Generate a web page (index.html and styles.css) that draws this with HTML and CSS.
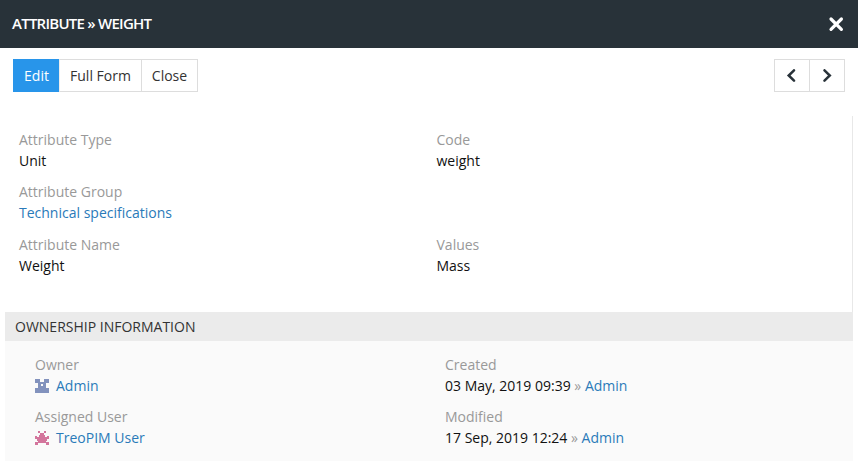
FILE: index.html
```html
<!DOCTYPE html>
<html lang="en">
<head>
<meta charset="utf-8">
<title>Attribute » Weight</title>
<link rel="stylesheet" href="styles.css">
</head>
<body>
<header class="modal-header">
  <h1 class="title">ATTRIBUTE » WEIGHT</h1>
  <svg class="close" width="16" height="16" viewBox="0 0 16 16"><path d="M3 3l10.4 10.4M13.4 3L3 13.4"/></svg>
</header>
<div class="toolbar">
  <div class="group">
    <button class="btn primary">Edit</button>
    <button class="btn full">Full Form</button>
    <button class="btn last">Close</button>
  </div>
  <div class="group pager">
    <button class="btn"><svg width="14" height="14" viewBox="0 0 14 14"><path d="M9 1.3L3.7 6.5 9 11.7"/></svg></button>
    <button class="btn"><svg width="14" height="14" viewBox="0 0 14 14"><path d="M4.5 1.3l5.3 5.2-5.3 5.2"/></svg></button>
  </div>
</div>
<main class="record">
  <section class="fields">
    <div class="cell"><div class="label">Attribute Type</div><div>Unit</div></div>
    <div class="cell"><div class="label">Code</div><div>weight</div></div>
    <div class="cell wide"><div class="label">Attribute Group</div><a>Technical specifications</a></div>
    <div class="cell"><div class="label">Attribute Name</div><div>Weight</div></div>
    <div class="cell"><div class="label">Values</div><div>Mass</div></div>
  </section>
  <h2 class="section-title">OWNERSHIP INFORMATION</h2>
  <section class="ownership">
    <div class="cell"><div class="label">Owner</div><div class="user"><svg class="blue" width="14" height="14" viewBox="0 0 14 14"><path fill-rule="evenodd" d="M0 0h5v3h4V0h5v4h-3v5h3v5H0V9h3V4H0zM6 5v2h2V5z"/></svg><a>Admin</a></div></div>
    <div class="cell"><div class="label">Created</div><div>03 May, 2019 09:39 <span class="sep">»</span> <a>Admin</a></div></div>
    <div class="cell"><div class="label">Assigned User</div><div class="user"><svg class="pink" width="14" height="14" viewBox="0 0 14 14"><path d="M3 0h2v2H3zM9 0h2v2H9zM5 2h4v2h1v2h2V5h2v3h-2v2h-1v2H3v-2H2V8H0V5h2v1h2V4h1zM0 11h3v3H0zM11 11h3v3h-3z"/></svg><a>TreoPIM User</a></div></div>
    <div class="cell"><div class="label">Modified</div><div>17 Sep, 2019 12:24 <span class="sep">»</span> <a>Admin</a></div></div>
  </section>
</main>
</body>
</html>
```
FILE: styles.css
```css
* { box-sizing: border-box; }
body { margin: 0; background: #fff; color: #111; font: 14px/21px "Open Sans", sans-serif; }
a { color: #2a7ab9; }
.modal-header { display: flex; align-items: center; justify-content: space-between; height: 48px; padding: 0 14px 0 12px; background: #283239; color: #fff; }
.title { margin: 0 0 2px; font-size: 15px; font-weight: 600; letter-spacing: -0.75px; }
.close { fill: none; stroke: #fff; stroke-width: 3.2; stroke-linecap: round; }
.toolbar { display: flex; justify-content: space-between; padding: 11px 13px 0; height: 68px; }
.group { display: flex; height: 33px; }
.btn { display: flex; align-items: center; justify-content: center; padding: 0; border: 1px solid #ddd; border-right: 0; background: #fff; color: #333; font: inherit; width: 35px; }
.btn:last-child { border-right: 1px solid #ddd; width: 36px; }
.btn.primary { width: 46px; background: #2895ea; border-color: #2895ea; color: #fff; }
.btn.full { width: 82px; border-left-color: #eee; }
.group .btn.last { width: 57px; }
.btn svg { fill: none; stroke: #283239; stroke-width: 2.5; stroke-linecap: round; }
.record { margin: 0 5px; }
.fields { display: grid; grid-template-columns: 417.5px 1fr; grid-template-rows: 52px 53px 1fr; height: 196px; padding: 13px 0 0 14px; border-right: 1px solid #e8e8e8; }
.wide { grid-column: 1 / 3; }
.label { color: #999; }
.section-title { margin: 0; height: 29px; padding-left: 10px; background: #ebebeb; color: #333; font-size: 14px; font-weight: 400; line-height: 29px; }
.ownership { display: grid; grid-template-columns: 410px 1fr; grid-template-rows: 52px 52px; height: 120px; padding: 13px 0 0 30px; background: #fafafa; }
.user { display: flex; align-items: center; gap: 7px; }
.blue { fill: #8292bd; }
.pink { fill: #d3759c; }
.sep { color: #999; }
```
